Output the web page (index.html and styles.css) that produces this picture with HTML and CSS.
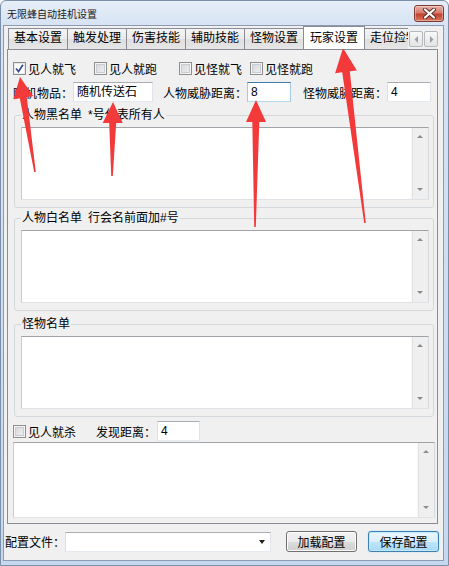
FILE: index.html
```html
<!DOCTYPE html>
<html lang="zh-CN">
<head>
  <meta charset="UTF-8">
  <title>无限蜂自动挂机设置</title>
  <link rel="stylesheet" href="styles.css">
</head>
<body>
  <div class="window">
    <div class="titlebar">
      <span class="title">无限蜂自动挂机设置</span>
      <span class="close">
        <svg width="13" height="11" viewBox="0 0 13 11">
          <path d="M2 1.5 L11 9.5 M11 1.5 L2 9.5" stroke="#5a2a24" stroke-width="4" stroke-linecap="round"/>
          <path d="M2 1.5 L11 9.5 M11 1.5 L2 9.5" stroke="#fff" stroke-width="2.2" stroke-linecap="round"/>
        </svg>
      </span>
    </div>

    <div class="client">
      <div class="tabstrip">
        <div class="tabs">
          <span class="tab">基本设置</span>
          <span class="tab">触发处理</span>
          <span class="tab">伤害技能</span>
          <span class="tab">辅助技能</span>
          <span class="tab">怪物设置</span>
          <span class="tab active">玩家设置</span>
          <span class="tab">走位捡物</span>
        </div>
        <div class="tab-scroll">
          <span class="spin"><svg width="5" height="7"><polygon points="4,0 4,7 0.5,3.5" fill="#9aa0a8"/></svg></span>
          <span class="spin"><svg width="5" height="7"><polygon points="1,0 1,7 4.5,3.5" fill="#9aa0a8"/></svg></span>
        </div>
      </div>

      <div class="panel">
        <div class="checks">
          <label class="check"><span class="box checked"><svg width="9" height="9" viewBox="0 0 9 9"><path d="M1 4.5 L3.5 7.5 L8 0.8" fill="none" stroke="#3b4f8a" stroke-width="1.8"/></svg></span>见人就飞</label>
          <label class="check"><span class="box"></span>见人就跑</label>
          <label class="check"><span class="box"></span>见怪就飞</label>
          <label class="check"><span class="box"></span>见怪就跑</label>
        </div>

        <div class="fields">
          <span class="label">随机物品：</span>
          <span class="textbox wide">随机传送石</span>
          <span class="label gap">人物威胁距离：</span>
          <span class="textbox short focused">8</span>
          <span class="label gap2">怪物威胁距离：</span>
          <span class="textbox short">4</span>
        </div>

        <fieldset class="group">
          <legend>人物黑名单&ensp;*号代表所有人</legend>
          <div class="list">
            <div class="list-body"></div>
            <div class="vscroll"><span class="up"></span><span class="down"></span></div>
          </div>
        </fieldset>

        <fieldset class="group second">
          <legend>人物白名单&ensp;行会名前面加#号</legend>
          <div class="list">
            <div class="list-body"></div>
            <div class="vscroll"><span class="up"></span><span class="down"></span></div>
          </div>
        </fieldset>

        <fieldset class="group third">
          <legend>怪物名单</legend>
          <div class="list">
            <div class="list-body"></div>
            <div class="vscroll"><span class="up"></span><span class="down"></span></div>
          </div>
        </fieldset>

        <div class="fields kill">
          <label class="check"><span class="box"></span>见人就杀</label>
          <span class="label gap3">发现距离：</span>
          <span class="textbox tiny">4</span>
        </div>

        <div class="list big">
          <div class="list-body"></div>
          <div class="vscroll"><span class="up"></span><span class="down"></span></div>
        </div>
      </div>

      <div class="footer">
        <span class="label">配置文件：</span>
        <span class="combo"><span class="drop"></span></span>
        <button class="btn">加载配置</button>
        <button class="btn default">保存配置</button>
      </div>
    </div>
  </div>

  <!-- red annotation arrows drawn over the dialog -->
  <svg class="arrows" width="449" height="566" viewBox="0 0 449 566">
    <g fill="#f23a3a">
      <polygon points="20,77 33.2,96.1 26.8,97.2 35.8,171.9 34.2,172.1 19.8,98.2 13.4,99.3"/>
      <polygon points="113,102 122.7,123.1 116.2,123 112.8,176 111.2,176 109.2,123 102.7,122.9"/>
      <polygon points="256,100 266,122 259.3,122 255.8,227 254.2,227 252.3,122 246,122"/>
      <polygon points="343,48 356.9,70.4 349.8,71.3 365.8,222.9 364.2,223.1 342.2,72.3 335.1,73.2"/>
    </g>
  </svg>
</body>
</html>
```

FILE: styles.css
```css
* {
  box-sizing: border-box;
}

html, body {
  margin: 0;
  width: 449px;
  height: 566px;
  overflow: hidden;
}

body {
  position: relative;
  font-family: "Liberation Sans", "Noto Sans CJK SC", sans-serif;
  font-size: 12px;
  color: #000;
}

.window {
  height: 566px;
  display: flex;
  flex-direction: column;
  border: 1px solid #7b8fa8;
  border-radius: 6px 6px 0 0;
  background: linear-gradient(to bottom, #e6eef8 0, #d6e3f3 25px, #c4d8ef 100%);
}

.titlebar {
  height: 24px;
  display: flex;
  align-items: center;
  padding: 0 4px 0 6px;
}

.title {
  flex: 1;
  font-size: 10px;
  color: #1a1a1a;
}

.close {
  width: 30px;
  height: 17px;
  display: flex;
  align-items: center;
  justify-content: center;
  border: 1px solid #7d3a32;
  border-radius: 3px;
  background: linear-gradient(to bottom, #e8b1a6 0, #d47a6b 45%, #c2412f 55%, #d8775f 100%);
  box-shadow: inset 0 0 0 1px rgba(255, 255, 255, 0.35);
}

.client {
  flex: 1;
  display: flex;
  flex-direction: column;
  margin: 0 4px 4px 2px;
  background: #f0f0f0;
  border: 1px solid #8c9bb0;
}

/* tabs */

.tabstrip {
  display: flex;
  height: 23px;
}

.tabs {
  flex: 1;
  display: flex;
  align-items: flex-end;
  padding-left: 4px;
  overflow: hidden;
}

.tab {
  flex-shrink: 0;
  height: 21px;
  padding: 0 5px;
  margin-left: -1px;
  line-height: 19px;
  font-size: 12px;
  border: 1px solid #898c95;
  border-bottom: none;
  background: linear-gradient(to bottom, #f3f3f3 0, #ebebeb 50%, #dedede 51%, #e6e6e6 100%);
}

.tab:first-child {
  margin-left: 0;
}

.tab.active {
  position: relative;
  z-index: 1;
  height: 24px;
  margin-bottom: -1px;
  padding: 0 6px;
  line-height: 22px;
  background: #fff;
}

.tab-scroll {
  display: flex;
  gap: 1px;
  padding: 5px 5px 0 1px;
}

.spin {
  width: 14px;
  height: 16px;
  display: flex;
  align-items: center;
  justify-content: center;
  border: 1px solid #b5b8bd;
  border-radius: 2px;
  background: linear-gradient(to bottom, #f8f8f8, #e4e4e4);
}

/* tab page */

.panel {
  position: relative;
  height: 475px;
  margin: 0 5px 0 3px;
  padding: 10px 2px 4px 5px;
  border: 1px solid #898c95;
  background: #f0f0f0;
}

.checks {
  display: grid;
  grid-template-columns: 81px 85px 71px auto;
  height: 16px;
  align-items: center;
}

.check {
  display: flex;
  align-items: center;
  white-space: nowrap;
}

.box {
  width: 13px;
  height: 13px;
  margin-right: 2px;
  display: flex;
  align-items: center;
  justify-content: center;
  border: 1px solid #8e8f8f;
  background: linear-gradient(135deg, #d2d5da 0, #f2f2f2 100%);
  box-shadow: inset 0 0 0 1px #f4f4f4, inset 0 0 0 2px #c9ccd1;
}

.box.checked {
  background: #fff;
  box-shadow: inset 0 0 0 1px #e6e8ec;
}

.fields {
  display: flex;
  align-items: center;
  height: 20px;
  margin-top: 6px;
  white-space: nowrap;
}

.label.gap {
  margin-left: 10px;
}

.label.gap2 {
  margin-left: 12px;
}

.label.gap3 {
  margin-left: 20px;
}

.textbox {
  height: 20px;
  padding: 0 3px;
  line-height: 18px;
  background: #fff;
  border: 1px solid;
  border-color: #abadb3 #e2e3ea #e3e9ef #dbdfe6;
}

.textbox.wide {
  width: 80px;
}

.textbox.short {
  width: 44px;
}

.textbox.tiny {
  width: 43px;
  margin-left: 1px;
}

.textbox.focused {
  border-color: #3d7bad #a4c9e3 #b7d9ed #a4c9e3;
}

/* group boxes */

.group {
  margin: 6px 1px 0 1px;
  height: 100px;
  padding: 5px 4px 7px 6px;
  border: 1px solid #d3d8dd;
  border-radius: 3px;
}

.group.second {
  margin-top: 3px;
}

.group.third {
  margin-top: 6px;
}

.group legend {
  padding: 0 1px;
  line-height: 14px;
  height: 14px;
}

.list {
  display: flex;
  height: 73px;
  background: #fff;
  border: 1px solid #abadb3;
  border-color: #a0a3a8 #d6d9de #dfe3e8 #c8ccd2;
}

.list.big {
  height: 76px;
  margin: 1px 0 0 0;
}

.list-body {
  flex: 1;
}

.vscroll {
  width: 17px;
  display: flex;
  flex-direction: column;
  justify-content: space-between;
  align-items: center;
  padding: 7px 0 8px;
  background: #efefef;
  border-left: 1px solid #f7f7f7;
  box-shadow: inset 1px 0 0 #e2e2e2;
}

.up,
.down {
  width: 0;
  height: 0;
  border-left: 3px solid transparent;
  border-right: 3px solid transparent;
}

.up {
  border-bottom: 3px solid #8c8c8c;
}

.down {
  border-top: 3px solid #8c8c8c;
}

.fields.kill {
  margin-top: 4px;
}

/* bottom bar */

.footer {
  flex: 1;
  display: flex;
  align-items: center;
  padding: 0 0 1px 1px;
  white-space: nowrap;
}

.combo {
  width: 206px;
  height: 20px;
  display: flex;
  align-items: center;
  justify-content: flex-end;
  padding-right: 5px;
  background: #fff;
  border: 1px solid;
  border-color: #abadb3 #e2e3ea #e3e9ef #dbdfe6;
}

.drop {
  width: 0;
  height: 0;
  border-left: 3.5px solid transparent;
  border-right: 3.5px solid transparent;
  border-top: 4px solid #222;
}

.btn {
  width: 71px;
  height: 21px;
  margin-left: 15px;
  padding: 0;
  font-family: inherit;
  font-size: 12px;
  color: #000;
  border: 1px solid #707070;
  border-radius: 3px;
  background: linear-gradient(to bottom, #f2f2f2 0, #ebebeb 50%, #dddddd 51%, #cfcfcf 100%);
  box-shadow: inset 0 0 0 1px #fbfbfb;
}

.btn.default {
  margin-left: 11px;
  border-color: #3c7fb1;
  background: linear-gradient(to bottom, #eaf6fd 0, #d9f0fc 50%, #bee6fd 51%, #a7d9f5 100%);
  box-shadow: inset 0 0 0 1px #c2e8fb, 0 0 1px #48c8f0;
}

.arrows {
  position: absolute;
  top: 0;
  left: 0;
  pointer-events: none;
}
```
